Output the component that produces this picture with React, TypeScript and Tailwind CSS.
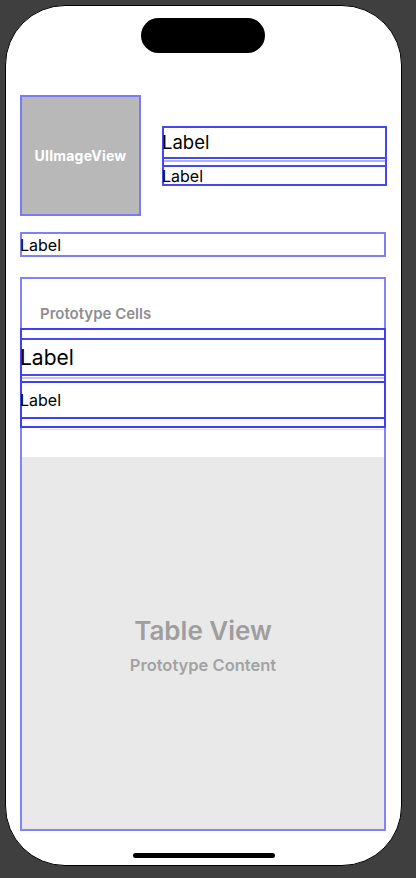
export default function App() {
  return (
    <div className="w-[416px] h-[878px] bg-[#3f3f3f] pt-[5px] pl-[5px] font-['Inter','Liberation_Sans',sans-serif]">
      <div className="relative w-[397px] h-[861px] rounded-[60px] border border-black bg-white pt-[89px] pl-[14px] flex flex-col">
        {/* Dynamic island */}
        <div className="absolute left-[135px] top-[12px] w-[124px] h-[35px] rounded-full bg-black" />

        {/* Header row */}
        <div className="flex items-start gap-[21px]">
          <div className="w-[121px] h-[121px] bg-[#b8b8b8] border-2 border-[#7a7af5] flex items-center justify-center">
            <span className="text-white text-[14px] font-bold tracking-[0.2px]">UIImageView</span>
          </div>
          <div className="mt-[31px] w-[225px] h-[60px] flex flex-col border-2 border-[#4747f2]">
            <div className="h-[31px] border-b-2 border-[#4747f2] flex items-center">
              <span className="-ml-[2px] text-[18.5px] leading-none text-black">Label</span>
            </div>
            <div className="h-[2px] mt-[1px] bg-[#b0b0f5]" />
            <div className="mt-[3px] flex-1 border-t-2 border-[#4747f2] flex items-center">
              <span className="-ml-[2px] text-[16px] leading-none text-black">Label</span>
            </div>
          </div>
        </div>

        {/* Label */}
        <div className="mt-[16px] w-[366px] h-[25px] border-2 border-[#8080f5] flex items-center">
          <span className="-ml-[2px] text-[16px] leading-none text-black">Label</span>
        </div>

        {/* Table view */}
        <div className="mt-[20px] w-[366px] h-[554px] border-2 border-[#8383f5] flex flex-col">
          <div className="h-[49px] pl-[18px] pt-[22px]">
            <span className="text-[15px] font-semibold leading-none text-[#8e8e93]">Prototype Cells</span>
          </div>
          <div className="-mx-[2px] h-[100px] border-2 border-[#4040f2] flex flex-col">
            <div className="mt-[8px] h-[38px] border-t-2 border-b-2 border-[#4a4af2] flex items-center">
              <span className="-ml-[2px] text-[21px] leading-none text-black">Label</span>
            </div>
            <div className="h-[2px] mt-[1px] bg-[#c4c4f5]" />
            <div className="mt-[2px] h-[38px] border-t-2 border-b-2 border-[#4040f2] flex items-center">
              <span className="-ml-[2px] text-[16px] leading-none text-black">Label</span>
            </div>
          </div>
          <div className="ml-[18px] h-[1px] mt-[1px] bg-[#dcdce0]" />
          <div className="h-[27px]" />
          <div className="flex-1 bg-[#e9e9e9] flex flex-col items-center pt-[161px]">
            <span className="text-[26px] font-semibold leading-none text-[#9e9e9e]">Table View</span>
            <span className="mt-[13px] text-[16.5px] font-semibold leading-none text-[#a3a3a3]">Prototype Content</span>
          </div>
        </div>

        {/* Home indicator */}
        <div className="mt-[22px] ml-[113px] w-[142px] h-[5px] rounded-full bg-black" />
      </div>
    </div>
  );
}
